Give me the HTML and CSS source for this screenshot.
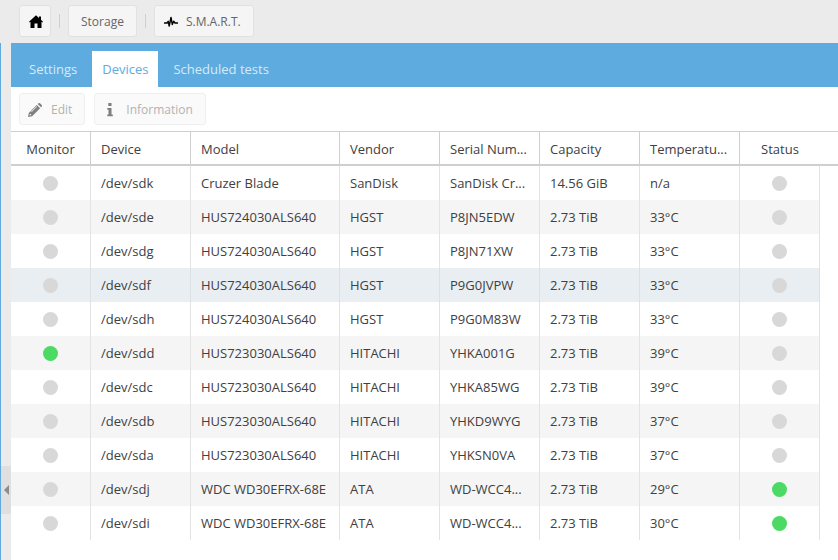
FILE: index.html
```html
<!DOCTYPE html>
<html lang="en">
<head>
<meta charset="utf-8">
<title>S.M.A.R.T. devices</title>
<link rel="stylesheet" href="styles.css">
</head>
<body>
<nav class="crumbs" aria-label="Breadcrumb">
  <button class="btn btn-home" type="button" aria-label="Home">
    <svg width="14" height="13" viewBox="0 0 14 13"><path fill="#000" d="M7 .2 10 3V1.500h2V4.800l2 1.900-.6.700-.9-.6V13H8.500V8.500H5.500V13H1.500V6.800l-.9.6L0 6.700z"/></svg>
  </button>
  <span class="sep"></span>
  <button class="btn" type="button">Storage</button>
  <span class="sep"></span>
  <button class="btn btn-smart" type="button">
    <svg width="14" height="12" viewBox="0 0 14 12"><path fill="none" stroke="#000" stroke-width="1.400" stroke-linejoin="round" d="M0 7H3L4.200 5.300 5.200 10 7 1.500 8.300 8.500 9.700 5.200 11 7H14"/></svg>
    S.M.A.R.T.
  </button>
</nav>
<div class="workspace">
  <div class="splitter">
    <button class="collapse" type="button" aria-label="Collapse navigation">
      <svg width="5" height="10" viewBox="0 0 5 10"><path fill="#8c8c8c" d="M5 0v10L0 5z"/></svg>
    </button>
  </div>
  <main class="panel">
    <nav class="tabs">
      <a class="tab" href="#settings">Settings</a>
      <a class="tab active" href="#devices" aria-current="page">Devices</a>
      <a class="tab" href="#tests">Scheduled tests</a>
    </nav>
    <div class="toolbar">
      <button class="btn btn-tool" type="button" disabled>
        <svg width="14" height="14" viewBox="0 0 14 14"><path fill="#7f7f7f" fill-rule="evenodd" d="M8.800 1.900 12.100 5.200 4.100 13.200 0 14 .8 9.900zM9.700 1 10.500.3Q11.300-.3 12 .3L13.700 2Q14.300 2.700 13.700 3.500L13 4.300zM1.900 10.900 1.500 12.500 3.100 12.100 3.100 10.900zM3.500 9.200 9 3.700 8.600 3.300 3.100 8.800z"/></svg>
        Edit
      </button>
      <button class="btn btn-tool" type="button" disabled>
        <svg width="14" height="14" viewBox="0 0 14 14"><path fill="#7f7f7f" d="M5.300 0h3.200v3H5.300zM4.300 5h4.200v6.500h1.300V13.300H4.300V11.500h1.200V6.700H4.300z"/></svg>
        Information
      </button>
    </div>
    <table class="grid">
      <colgroup><col class="c-dot"><col class="c-text"><col class="c-model"><col class="c-text"><col class="c-text"><col class="c-text"><col class="c-text"><col class="c-dot"><col></colgroup>
      <thead>
        <tr><th class="mid">Monitor</th><th>Device</th><th>Model</th><th>Vendor</th><th>Serial Num...</th><th>Capacity</th><th>Temperatu...</th><th class="mid">Status</th><td class="rest"></td></tr>
      </thead>
      <tbody>
        <tr><td class="mid"><span class="dot"></span></td><td>/dev/sdk</td><td>Cruzer Blade</td><td>SanDisk</td><td>SanDisk Cr...</td><td>14.56 GiB</td><td>n/a</td><td class="mid"><span class="dot"></span></td><td class="rest"></td></tr>
        <tr><td class="mid"><span class="dot"></span></td><td>/dev/sde</td><td>HUS724030ALS640</td><td>HGST</td><td>P8JN5EDW</td><td>2.73 TiB</td><td>33°C</td><td class="mid"><span class="dot"></span></td><td class="rest"></td></tr>
        <tr><td class="mid"><span class="dot"></span></td><td>/dev/sdg</td><td>HUS724030ALS640</td><td>HGST</td><td>P8JN71XW</td><td>2.73 TiB</td><td>33°C</td><td class="mid"><span class="dot"></span></td><td class="rest"></td></tr>
        <tr class="hover"><td class="mid"><span class="dot"></span></td><td>/dev/sdf</td><td>HUS724030ALS640</td><td>HGST</td><td>P9G0JVPW</td><td>2.73 TiB</td><td>33°C</td><td class="mid"><span class="dot"></span></td><td class="rest"></td></tr>
        <tr><td class="mid"><span class="dot"></span></td><td>/dev/sdh</td><td>HUS724030ALS640</td><td>HGST</td><td>P9G0M83W</td><td>2.73 TiB</td><td>33°C</td><td class="mid"><span class="dot"></span></td><td class="rest"></td></tr>
        <tr><td class="mid"><span class="dot on"></span></td><td>/dev/sdd</td><td>HUS723030ALS640</td><td>HITACHI</td><td>YHKA001G</td><td>2.73 TiB</td><td>39°C</td><td class="mid"><span class="dot"></span></td><td class="rest"></td></tr>
        <tr><td class="mid"><span class="dot"></span></td><td>/dev/sdc</td><td>HUS723030ALS640</td><td>HITACHI</td><td>YHKA85WG</td><td>2.73 TiB</td><td>39°C</td><td class="mid"><span class="dot"></span></td><td class="rest"></td></tr>
        <tr><td class="mid"><span class="dot"></span></td><td>/dev/sdb</td><td>HUS723030ALS640</td><td>HITACHI</td><td>YHKD9WYG</td><td>2.73 TiB</td><td>37°C</td><td class="mid"><span class="dot"></span></td><td class="rest"></td></tr>
        <tr><td class="mid"><span class="dot"></span></td><td>/dev/sda</td><td>HUS723030ALS640</td><td>HITACHI</td><td>YHKSN0VA</td><td>2.73 TiB</td><td>37°C</td><td class="mid"><span class="dot"></span></td><td class="rest"></td></tr>
        <tr><td class="mid"><span class="dot"></span></td><td>/dev/sdj</td><td>WDC WD30EFRX-68E</td><td>ATA</td><td>WD-WCC4...</td><td>2.73 TiB</td><td>29°C</td><td class="mid"><span class="dot on"></span></td><td class="rest"></td></tr>
        <tr><td class="mid"><span class="dot"></span></td><td>/dev/sdi</td><td>WDC WD30EFRX-68E</td><td>ATA</td><td>WD-WCC4...</td><td>2.73 TiB</td><td>30°C</td><td class="mid"><span class="dot on"></span></td><td class="rest"></td></tr>
      </tbody>
    </table>
  </main>
</div>
</body>
</html>
```
FILE: styles.css
```css
* { box-sizing: border-box; }

body {
  margin: 0;
  min-height: 100vh;
  display: flex;
  flex-direction: column;
  background: #ebebeb;
  color: #404040;
  font: 13px/18px "Open Sans", "Noto Sans", sans-serif;
}

svg { display: block; flex: none; }

.crumbs {
  display: flex;
  align-items: center;
  gap: 8px;
  padding: 5px 8px 6px 19px;
}

.btn {
  display: flex;
  align-items: center;
  height: 32px;
  padding: 2px 12px 0;
  border: 1px solid #e1e1e1;
  border-radius: 3px;
  background: #f5f5f5;
  color: #666;
  font: 12px/18px "Open Sans", "Noto Sans", sans-serif;
}

.btn-home { padding: 0 7px 0 9px; }
.btn-smart { gap: 8px; padding: 2px 12px 0 9px; }

.sep {
  width: 1px;
  height: 14px;
  background: #cfcfcf;
}

.workspace {
  flex: 1;
  display: flex;
}

.splitter {
  flex: none;
  width: 11px;
  border-left: 1px solid #5fa9dd;
  display: flex;
  flex-direction: column;
  justify-content: flex-end;
  padding-bottom: 46px;
}

.collapse {
  display: flex;
  align-items: center;
  justify-content: flex-end;
  height: 48px;
  padding: 0 2px 0 0;
  border: 0;
  background: #dfdfdf;
}

.panel {
  flex: 1;
  min-width: 0;
  background: #fff;
}

.tabs {
  display: flex;
  gap: 5px;
  padding: 8px 8px 0;
  background: #5dabdf;
}

.tab {
  padding: 9px 10px;
  color: #d7eaf7;
  text-decoration: none;
}

.tab.active {
  background: #fff;
  color: #5dabdf;
}

.toolbar {
  display: flex;
  gap: 9px;
  padding: 6px 8px;
}

.btn-tool {
  gap: 9px;
  padding: 2px 12px 0 8px;
  border-color: #efefef;
  background: #fafafa;
  color: #b2b2b2;
}

.grid {
  width: 100%;
  table-layout: fixed;
  border-collapse: separate;
  border-spacing: 0;
}

.c-dot { width: 80px; }
.c-text { width: 100px; }
.c-model { width: 149px; }

.grid th,
.grid td {
  height: 34px;
  padding: 0 10px;
  border-right: 1px solid #e3e3e3;
  font-weight: normal;
  text-align: left;
  white-space: nowrap;
  overflow: hidden;
  text-overflow: ellipsis;
}

.grid thead th,
.grid thead td {
  height: 35px;
  padding-top: 2px;
  border-top: 1px solid #cfcfcf;
  border-right-color: #cfcfcf;
  border-bottom: 2px solid #cfcfcf;
}

.grid thead th:nth-child(8) { border-right: 0; }

.grid tbody tr:nth-child(even) td { background: #f5f5f5; }
.grid tbody tr.hover td { background: #e9eef2; border-right-color: #dce1e5; }
.grid tbody tr td.rest { background: #fff; }

.grid .rest { border-right: 0; padding: 0; }
.grid .mid { text-align: center; }

.dot {
  display: block;
  width: 15px;
  height: 15px;
  margin: 0 auto;
  border-radius: 50%;
  background: #d8d8d8;
}

.dot.on { background: #4cd964; }
```
